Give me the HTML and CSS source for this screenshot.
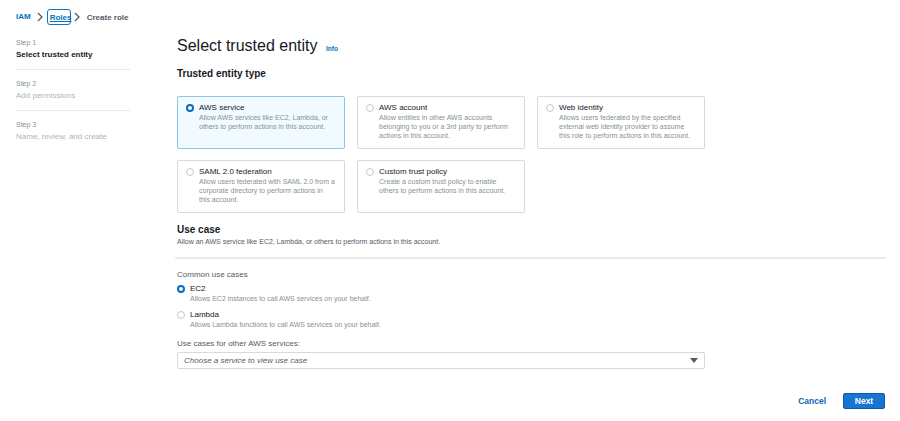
FILE: index.html
```html
<!DOCTYPE html>
<html lang="en">
<head>
<meta charset="utf-8">
<title>Create role</title>
<link rel="stylesheet" href="styles.css">
</head>
<body>
<nav class="crumbs">
  <a class="crumb-link">IAM</a>
  <svg class="chev" viewBox="0 0 6 10" width="6" height="10"><path d="M1 1l4 4-4 4" fill="none" stroke="#545b64" stroke-width="1.3"/></svg>
  <a class="crumb-link crumb-focus">Roles</a>
  <svg class="chev chev2" viewBox="0 0 6 10" width="6" height="10"><path d="M1 1l4 4-4 4" fill="none" stroke="#545b64" stroke-width="1.3"/></svg>
  <span class="crumb-current">Create role</span>
</nav>

<div class="layout">
  <aside class="steps">
    <div class="step">
      <div class="step-num">Step 1</div>
      <div class="step-name active">Select trusted entity</div>
    </div>
    <div class="step">
      <div class="step-num">Step 2</div>
      <div class="step-name">Add permissions</div>
    </div>
    <div class="step last">
      <div class="step-num">Step 3</div>
      <div class="step-name">Name, review, and create</div>
    </div>
  </aside>

  <main class="main">
    <h1 class="title">Select trusted entity <span class="info">Info</span></h1>
    <h2 class="section">Trusted entity type</h2>

    <div class="cards">
      <div class="card selected">
        <span class="radio on"></span>
        <div class="card-text">
          <div class="card-title">AWS service</div>
          <div class="card-desc">Allow AWS services like EC2, Lambda, or<br>others to perform actions in this account.</div>
        </div>
      </div>
      <div class="card">
        <span class="radio"></span>
        <div class="card-text">
          <div class="card-title">AWS account</div>
          <div class="card-desc">Allow entities in other AWS accounts<br>belonging to you or a 3rd party to perform<br>actions in this account.</div>
        </div>
      </div>
      <div class="card">
        <span class="radio"></span>
        <div class="card-text">
          <div class="card-title">Web identity</div>
          <div class="card-desc">Allows users federated by the specified<br>external web identity provider to assume<br>this role to perform actions in this account.</div>
        </div>
      </div>
      <div class="card">
        <span class="radio"></span>
        <div class="card-text">
          <div class="card-title">SAML 2.0 federation</div>
          <div class="card-desc">Allow users federated with SAML 2.0 from a<br>corporate directory to perform actions in<br>this account.</div>
        </div>
      </div>
      <div class="card">
        <span class="radio"></span>
        <div class="card-text">
          <div class="card-title">Custom trust policy</div>
          <div class="card-desc">Create a custom trust policy to enable<br>others to perform actions in this account.</div>
        </div>
      </div>
    </div>

    <h2 class="section usecase">Use case</h2>
    <p class="section-desc">Allow an AWS service like EC2, Lambda, or others to perform actions in this account.</p>
    <hr class="divider">

    <div class="label">Common use cases</div>
    <div class="option">
      <span class="radio on"></span>
      <div>
        <div class="opt-title">EC2</div>
        <div class="opt-desc">Allows EC2 instances to call AWS services on your behalf.</div>
      </div>
    </div>
    <div class="option second">
      <span class="radio"></span>
      <div>
        <div class="opt-title">Lambda</div>
        <div class="opt-desc">Allows Lambda functions to call AWS services on your behalf.</div>
      </div>
    </div>

    <div class="label other">Use cases for other AWS services:</div>
    <div class="select">
      <span class="placeholder">Choose a service to view use case</span>
      <svg class="caret" viewBox="0 0 8 5" width="8" height="5"><path d="M0 0h8L4 5z" fill="#545b64"/></svg>
    </div>

    <div class="actions">
      <a class="cancel">Cancel</a>
      <button class="next">Next</button>
    </div>
  </main>
</div>
</body>
</html>
```

FILE: styles.css
```css
* { box-sizing: border-box; }

body {
  margin: 0;
  background: #fff;
  font-family: "Liberation Sans", Arial, Helvetica, sans-serif;
  color: #16191f;
}

.crumbs {
  display: flex;
  align-items: center;
  height: 16px;
  margin-top: 9px;
  padding-left: 16px;
  font-size: 8px;
}

.crumb-link {
  color: #0073bb;
  font-weight: 700;
  line-height: 10px;
}

.chev { margin: 0 4px 0 6px; }
.chev2 { margin: 0 7px 0 3px; }

.crumb-focus {
  height: 16px;
  padding: 3px 1px 0 2px;
  border: 1.5px solid #0a78c8;
  border-radius: 3px;
  text-decoration: underline;
  width: 24px;
}

.crumb-current {
  color: #545b64;
  font-weight: 700;
}

.layout {
  display: flex;
  margin-top: 11px;
  padding-left: 16px;
}

.steps {
  flex: none;
  width: 114px;
  padding-top: 1px;
}

.step {
  padding: 8px 0;
  border-bottom: 1px solid #e6e8ea;
}
.step:first-child { padding-top: 0; }
.step.last { border-bottom: none; }

.step-num {
  font-size: 7px;
  line-height: 12px;
  color: #879196;
}

.step-name {
  font-size: 8px;
  line-height: 12px;
  color: #aab7b8;
}
.step-name.active {
  color: #16191f;
  font-weight: 700;
}

.main {
  flex: none;
  width: 708px;
  margin-left: 47px;
}

.title {
  margin: 0;
  height: 20px;
  font-size: 16px;
  line-height: 20px;
  font-weight: 400;
  color: #16191f;
}

.info {
  margin-left: 4px;
  font-size: 6.5px;
  line-height: 8px;
  font-weight: 700;
  color: #0073bb;
}

.section {
  margin: 12px 0 0;
  font-size: 10px;
  line-height: 12px;
  font-weight: 700;
}

.cards {
  display: grid;
  grid-template-columns: repeat(3, 168px);
  gap: 11px 12px;
  margin-top: 16px;
}

.card {
  display: flex;
  gap: 5px;
  padding: 6px 8px 8px 8px;
  border: 1px solid #d5dbdb;
  border-radius: 2px;
  background: #fff;
}

.card.selected {
  background: #f1faff;
  border-color: #8ec4ea;
}

.radio {
  flex: none;
  width: 8px;
  height: 8px;
  margin-top: 1px;
  border: 1px solid #c4cacb;
  border-radius: 50%;
  background: #fff;
}

.radio.on {
  border: 2.5px solid #0a6cc0;
}

.card-title {
  font-size: 8px;
  line-height: 10px;
  color: #16191f;
}

.card-desc {
  font-size: 7px;
  line-height: 9px;
  color: #879196;
  white-space: nowrap;
}

.usecase { margin-top: 11px; }

.section-desc {
  margin: 1px 0 0;
  font-size: 7px;
  line-height: 10px;
  color: #545b64;
}

.divider {
  margin: 10px 0 0 -2px;
  width: 711px;
  height: 2px;
  border: none;
  background: #e9ebed;
}

.label {
  margin-top: 11px;
  font-size: 8px;
  line-height: 10px;
  color: #545b64;
}

.option {
  display: flex;
  gap: 5px;
  margin-top: 4px;
}
.option.second { margin-top: 7px; }

.opt-title {
  font-size: 8px;
  line-height: 10px;
  color: #16191f;
}

.opt-desc {
  font-size: 7px;
  line-height: 9px;
  color: #879196;
}

.label.other { margin-top: 10px; }

.select {
  display: flex;
  align-items: center;
  justify-content: space-between;
  width: 528px;
  height: 17px;
  margin-top: 3px;
  padding: 0 6px;
  border: 1px solid #d5dbdb;
  border-radius: 2px;
}

.placeholder {
  font-size: 8px;
  font-style: italic;
  color: #545b64;
}

.actions {
  display: flex;
  justify-content: flex-end;
  align-items: center;
  margin-top: 24px;
}

.cancel {
  margin-right: 17px;
  font-size: 8.5px;
  font-weight: 700;
  color: #0a64b4;
}

.next {
  width: 42px;
  height: 16px;
  padding: 0;
  border: 1px solid #0b5aa8;
  border-radius: 2px;
  background: #1774d1;
  color: #fff;
  font-family: inherit;
  font-size: 8.5px;
  font-weight: 700;
}
```
